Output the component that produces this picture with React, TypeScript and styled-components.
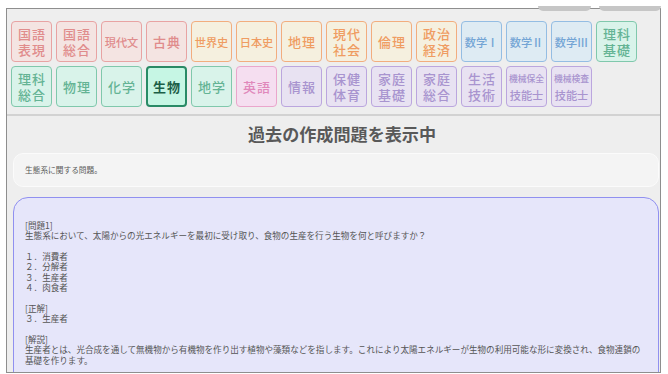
import React from "react";
import styled, { createGlobalStyle } from "styled-components";

const Global = createGlobalStyle`
  html, body { margin: 0; padding: 0; background: #ffffff; }
  body { font-family: "Noto Sans CJK JP", "Noto Sans", sans-serif; }
`;

type Group = "red" | "orange" | "blue" | "green" | "pink" | "purple";

const palette: Record<Group, { border: string; bg: string; text: string }> = {
  red: { border: "#e8a3a3", bg: "#f4e4e2", text: "#e08c8c" },
  orange: { border: "#f2ad7e", bg: "#f5f0df", text: "#ef9c62" },
  blue: { border: "#94bde3", bg: "#deebf3", text: "#74a5d5" },
  green: { border: "#80c8ac", bg: "#d9f3ea", text: "#64b394" },
  pink: { border: "#eaa6cc", bg: "#f5def0", text: "#e088bb" },
  purple: { border: "#bba6de", bg: "#e8e2f2", text: "#a894cf" },
};

const subjects: { lines: string[]; group: Group; active?: boolean }[] = [
  { lines: ["国語", "表現"], group: "red" },
  { lines: ["国語", "総合"], group: "red" },
  { lines: ["現代文"], group: "red" },
  { lines: ["古典"], group: "red" },
  { lines: ["世界史"], group: "orange" },
  { lines: ["日本史"], group: "orange" },
  { lines: ["地理"], group: "orange" },
  { lines: ["現代", "社会"], group: "orange" },
  { lines: ["倫理"], group: "orange" },
  { lines: ["政治", "経済"], group: "orange" },
  { lines: ["数学Ⅰ"], group: "blue" },
  { lines: ["数学Ⅱ"], group: "blue" },
  { lines: ["数学Ⅲ"], group: "blue" },
  { lines: ["理科", "基礎"], group: "green" },
  { lines: ["理科", "総合"], group: "green" },
  { lines: ["物理"], group: "green" },
  { lines: ["化学"], group: "green" },
  { lines: ["生物"], group: "green", active: true },
  { lines: ["地学"], group: "green" },
  { lines: ["英語"], group: "pink" },
  { lines: ["情報"], group: "purple" },
  { lines: ["保健", "体育"], group: "purple" },
  { lines: ["家庭", "基礎"], group: "purple" },
  { lines: ["家庭", "総合"], group: "purple" },
  { lines: ["生活", "技術"], group: "purple" },
  { lines: ["機械保全", "技能士"], group: "purple" },
  { lines: ["機械検査", "技能士"], group: "purple" },
];

const sizeFor = (n: number) => (n <= 2 ? 13 : n === 3 ? 11.2 : 8.8);

const Window = styled.div`
  position: relative;
  width: 668px;
  height: 374px;
  padding: 8px 0 0 6px;
  box-sizing: border-box;
  overflow: hidden;
`;

const TopTab = styled.div<{ $left: number; $width: number }>`
  position: absolute;
  top: 6px;
  left: ${(p) => p.$left}px;
  width: ${(p) => p.$width}px;
  height: 5px;
  background: #c6c6c6;
  border-radius: 0 0 6px 6px;
  z-index: 2;
`;

const Frame = styled.div`
  width: 655px;
  height: 365px;
  box-sizing: border-box;
  border: 1px solid #8e8e8e;
  background: #eeeeee;
  overflow: hidden;
`;

const SubjectGrid = styled.div`
  display: flex;
  flex-wrap: wrap;
  gap: 4px;
  padding: 12px 4px 0 4px;
`;

const SubjectButton = styled.div<{ $group: Group; $active?: boolean }>`
  width: 41px;
  height: 41px;
  box-sizing: border-box;
  border: ${(p) => (p.$active ? "2px solid #2a8a66" : `1.5px solid ${palette[p.$group].border}`)};
  background: ${(p) => (p.$active ? "#c6f6e4" : palette[p.$group].bg)};
  color: ${(p) => (p.$active ? "#1c5f47" : palette[p.$group].text)};
  font-weight: ${(p) => (p.$active ? 700 : 500)};
  border-radius: 4px;
  display: flex;
  flex-direction: column;
  align-items: center;
  justify-content: center;
  white-space: nowrap;
  overflow: hidden;
`;

const Line = styled.span<{ $size: number }>`
  display: block;
  height: 16px;
  line-height: 16px;
  font-size: ${(p) => p.$size}px;
  letter-spacing: ${(p) => (p.$size > 12 ? "0.8px" : "0")};
  margin-right: ${(p) => (p.$size > 12 ? "-0.8px" : "0")};
`;

const Divider = styled.div`
  margin-top: 7px;
  height: 1.5px;
  background: #d2d2d2;
`;

const Content = styled.div`
  padding: 0 1px 0 6px;
`;

const Heading = styled.h2`
  margin: 6px 0 0;
  padding-left: 12px;
  text-align: center;
  font-size: 17.1px;
  line-height: 24px;
  font-weight: 700;
  color: #595959;
`;

const DescBox = styled.div`
  margin-top: 7px;
  height: 34px;
  box-sizing: border-box;
  border: 1px solid #fbfbfb;
  border-radius: 10px;
  background: #f4f4f4;
  padding: 0 11px;
  display: flex;
  align-items: center;
  font-size: 7.7px;
  color: #5a5a5a;
`;

const QuestionBox = styled.div`
  margin-top: 10px;
  border: 1px solid #9090f0;
  border-top-width: 1.5px;
  border-radius: 15px 15px 0 0;
  background: #e6e6fa;
  padding: 22px 13px 22px 11px;
  white-space: pre-wrap;
  font-size: 8.57px;
  line-height: 10.4px;
  color: #555555;
`;

const questionText = `[問題1]
生態系において、太陽からの光エネルギーを最初に受け取り、食物の生産を行う生物を何と呼びますか？

１．消費者
２．分解者
３．生産者
４．肉食者

[正解]
３．生産者

[解説]
生産者とは、光合成を通して無機物から有機物を作り出す植物や藻類などを指します。これにより太陽エネルギーが生物の利用可能な形に変換され、食物連鎖の基礎を作ります。`;

export default function App() {
  return (
    <>
      <Global />
      <Window>
        <TopTab $left={538} $width={53} />
        <TopTab $left={599} $width={62} />
        <Frame>
          <SubjectGrid>
            {subjects.map((s, i) => (
              <SubjectButton key={i} $group={s.group} $active={s.active}>
                {s.lines.map((l, j) => (
                  <Line key={j} $size={sizeFor(l.length)}>
                    {l}
                  </Line>
                ))}
              </SubjectButton>
            ))}
          </SubjectGrid>
          <Divider />
          <Content>
            <Heading>過去の作成問題を表示中</Heading>
            <DescBox>生態系に関する問題。</DescBox>
            <QuestionBox>{questionText}</QuestionBox>
          </Content>
        </Frame>
      </Window>
    </>
  );
}
